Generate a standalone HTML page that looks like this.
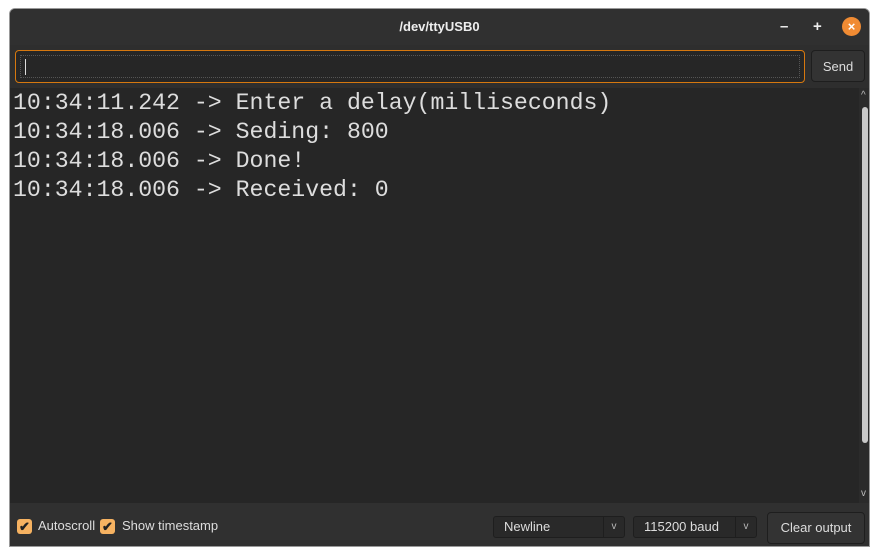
<!DOCTYPE html>
<html><head><style>
body{margin:0;width:880px;height:557px;background:#fff;position:relative;overflow:hidden;font-family:"Liberation Sans",sans-serif}
.win{position:absolute;left:9px;top:8px;width:861px;height:539px;background:#2e2e2e;border-radius:6px 6px 0 0;overflow:hidden;border:1px solid #999;box-sizing:border-box}
.title{position:absolute;left:0;top:0;width:100%;height:36px;background:#303030;color:#eee;font-size:13px;font-weight:bold;text-align:center;line-height:36px}
.ctl{position:absolute;top:0;color:#eee;font-weight:bold;font-size:15px;line-height:36px}
.close{position:absolute;left:832px;top:8px;width:19px;height:19px;border-radius:50%;background:#f08b33;color:#fff;font-size:13px;line-height:19px;text-align:center;font-weight:bold}
.inp{position:absolute;left:5px;top:41px;width:790px;height:33px;border:1px solid #d6780f;border-radius:4px;background:#262626;box-sizing:border-box}
.inp .in{position:absolute;left:4px;top:4px;right:4px;bottom:4px;border:1px dotted #555}
.inp .cur{position:absolute;left:9px;top:8px;width:1px;height:16px;background:#ddd}
.send{position:absolute;left:801px;top:41px;width:54px;height:32px;border:1px solid #1e1e1e;border-radius:4px;background:#333;color:#ddd;font-size:13px;text-align:center;line-height:31px;box-sizing:border-box}
.out{position:absolute;left:0;top:79px;width:849px;height:415px;background:#262626}
.txt{position:absolute;left:3px;top:1px;color:#ddd;font-family:"Liberation Mono",monospace;font-size:23.2px;line-height:29px;white-space:pre}
.sb{position:absolute;left:849px;top:79px;width:12px;height:415px;background:#2b2b2b}
.thumb{position:absolute;left:3px;top:19px;width:6px;height:336px;background:#c8c8c8;border-radius:3px}
.sb .a{position:absolute;left:2px;color:#bbb;font-size:10px}
.bot{position:absolute;left:0;top:494px;width:100%;height:45px;background:#303030;color:#ddd;font-size:13px}
.cb{position:absolute;top:16px;width:15px;height:15px;background:#f6b261;border-radius:3px;color:#222;font-size:13px;line-height:15px;text-align:center;font-weight:bold}
.lbl{position:absolute;top:14px}
.combo{position:absolute;top:13px;height:22px;border:1px solid #1e1e1e;border-radius:3px;background:#292929;box-sizing:border-box;line-height:20px}
.combo .dd{position:absolute;right:0;top:0;width:20px;height:20px;border-left:1px solid #1e1e1e;text-align:center;font-size:10px;color:#bbb}
.clr{position:absolute;left:757px;top:9px;width:98px;height:32px;border:1px solid #1e1e1e;border-radius:4px;background:#333;text-align:center;line-height:30px;box-sizing:border-box}
</style></head><body>
<div class="win">
<div class="title">/dev/ttyUSB0</div>
<div class="ctl" style="left:770px">–</div>
<div class="ctl" style="left:803px">+</div>
<div class="close">×</div>
<div class="inp"><div class="in"></div><div class="cur"></div></div>
<div class="send">Send</div>
<div class="out"><div class="txt">10:34:11.242 -&gt; Enter a delay(milliseconds)
10:34:18.006 -&gt; Seding: 800
10:34:18.006 -&gt; Done!
10:34:18.006 -&gt; Received: 0</div></div>
<div class="sb"><div class="a" style="top:2px">^</div><div class="thumb"></div><div class="a" style="top:400px">v</div></div>
<div class="bot">
<div class="cb" style="left:7px">✔</div><div class="lbl" style="left:28px;top:15px">Autoscroll</div>
<div class="cb" style="left:90px">✔</div><div class="lbl" style="left:112px;top:15px">Show timestamp</div>
<div class="combo" style="left:483px;width:132px"><span style="padding-left:10px">Newline</span><div class="dd">v</div></div>
<div class="combo" style="left:623px;width:124px"><span style="padding-left:10px">115200 baud</span><div class="dd">v</div></div>
<div class="clr">Clear output</div>
</div>
</div>
</body></html>
